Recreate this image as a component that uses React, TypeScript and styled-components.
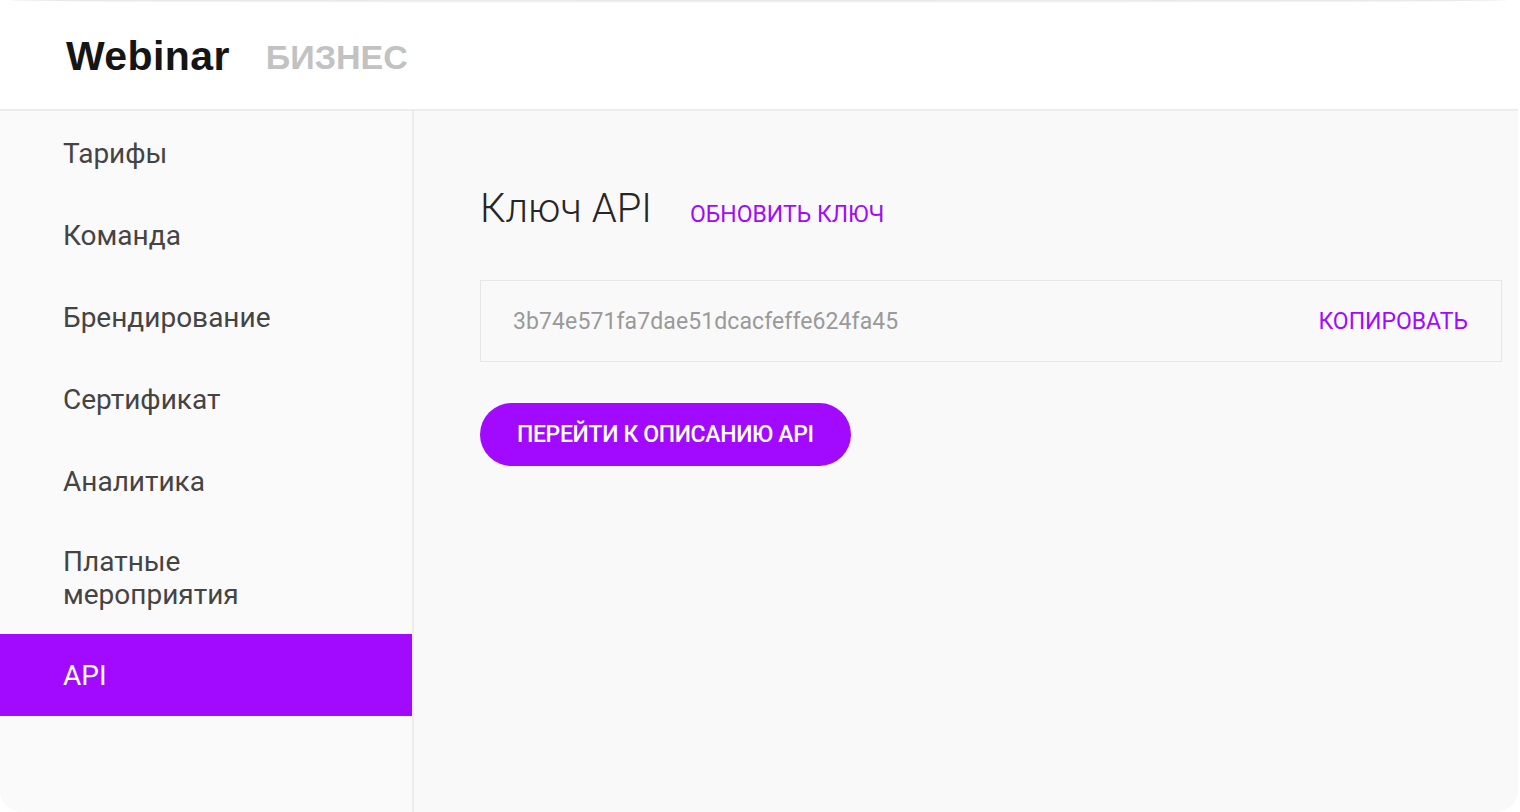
import React from "react";
import styled, { createGlobalStyle } from "styled-components";

const GlobalStyle = createGlobalStyle`
  html, body {
    margin: 0;
    padding: 0;
    background: #ffffff;
  }
  body {
    font-family: Roboto, "Noto Sans", Arial, sans-serif;
    -webkit-font-smoothing: antialiased;
  }
  * { box-sizing: border-box; }
`;

const PURPLE = "#a10aff";

const Page = styled.div`
  width: 1520px;
  height: 812px;
  background: #ffffff;
  overflow: hidden;
`;

const TopEdge = styled.div`
  height: 3px;
  margin: 0 14px 0 10px;
  background: linear-gradient(
    to bottom,
    #e6e6e6 0%,
    #f2f2f2 60%,
    #ffffff 100%
  );
  border-radius: 0 0 50% 50% / 0 0 100% 100%;
`;

const Card = styled.div`
  width: 1518px;
  height: 809px;
  display: flex;
  flex-direction: column;
  background: #fafafa;
  border-radius: 0 0 22px 22px;
  overflow: hidden;
`;

const Header = styled.header`
  height: 108px;
  flex: none;
  display: flex;
  align-items: center;
  gap: 36px;
  padding: 0 0 0 66px;
  background: #ffffff;
  border-bottom: 2px solid #ececec;
  box-shadow: 0 1px 2px rgba(0, 0, 0, 0.03);
`;

const Brand = styled.span`
  font-family: "Liberation Sans", Arial, sans-serif;
  font-weight: 700;
  font-size: 41px;
  color: #151515;
  letter-spacing: 0.4px;
`;

const Tier = styled.span`
  font-family: "Liberation Sans", Arial, sans-serif;
  font-weight: 700;
  font-size: 34px;
  color: #c2c2c2;
  margin-top: 2px;
`;

const Body = styled.div`
  flex: 1;
  display: flex;
  min-height: 0;
`;

const Sidebar = styled.nav`
  width: 414px;
  flex: none;
  display: flex;
  flex-direction: column;
  padding-top: 1px;
  background: #fafafa;
  border-right: 2px solid #ededed;
`;

const NavItem = styled.div<{ $active?: boolean }>`
  min-height: 82px;
  display: flex;
  align-items: center;
  padding: 23px 20px 23px 63px;
  font-size: 28px;
  line-height: 33px;
  font-weight: 400;
  color: ${(p) => (p.$active ? "#ffffff" : "#444444")};
  background: ${(p) => (p.$active ? PURPLE : "transparent")};
`;

const Main = styled.main`
  flex: 1;
  display: flex;
  flex-direction: column;
  align-items: flex-start;
  padding: 74px 16px 0 66px;
  background: #f9f9f9;
`;

const TitleRow = styled.div`
  display: flex;
  align-items: baseline;
  gap: 38px;
`;

const Title = styled.h1`
  margin: 0;
  font-size: 40px;
  line-height: 48px;
  font-weight: 300;
  color: #262626;
`;

const LinkButton = styled.button`
  border: none;
  background: none;
  padding: 0;
  font-family: Roboto, Arial, sans-serif;
  font-size: 23px;
  font-weight: 400;
  letter-spacing: 0;
  color: ${PURPLE};
  text-transform: uppercase;
  cursor: pointer;
`;

const KeyBox = styled.div`
  align-self: stretch;
  margin-top: 47px;
  height: 82px;
  display: flex;
  align-items: center;
  justify-content: space-between;
  padding: 0 33px 0 32px;
  border: 1px solid #e6e6e6;
  background: #f9f9f9;
`;

const KeyText = styled.span`
  font-size: 23px;
  color: #9a9a9a;
  letter-spacing: 0.1px;
`;

const PrimaryButton = styled.button`
  margin-top: 41px;
  height: 63px;
  padding: 0 37px;
  border: none;
  border-radius: 32px;
  background: ${PURPLE};
  color: #ffffff;
  font-family: Roboto, Arial, sans-serif;
  font-size: 23px;
  font-weight: 500;
  letter-spacing: -0.35px;
  text-transform: uppercase;
  cursor: pointer;
`;

const items = [
  "Тарифы",
  "Команда",
  "Брендирование",
  "Сертификат",
  "Аналитика",
  "Платные мероприятия",
  "API",
];

export default function App() {
  return (
    <Page>
      <GlobalStyle />
      <TopEdge />
      <Card>
        <Header>
          <Brand>Webinar</Brand>
          <Tier>БИЗНЕС</Tier>
        </Header>
        <Body>
          <Sidebar>
            {items.map((it) => (
              <NavItem key={it} $active={it === "API"}>
                {it === "Платные мероприятия" ? (
                  <span>
                    Платные
                    <br />
                    мероприятия
                  </span>
                ) : (
                  it
                )}
              </NavItem>
            ))}
          </Sidebar>
          <Main>
            <TitleRow>
              <Title>Ключ API</Title>
              <LinkButton>Обновить ключ</LinkButton>
            </TitleRow>
            <KeyBox>
              <KeyText>3b74e571fa7dae51dcacfeffe624fa45</KeyText>
              <LinkButton>Копировать</LinkButton>
            </KeyBox>
            <PrimaryButton>Перейти к описанию API</PrimaryButton>
          </Main>
        </Body>
      </Card>
    </Page>
  );
}
